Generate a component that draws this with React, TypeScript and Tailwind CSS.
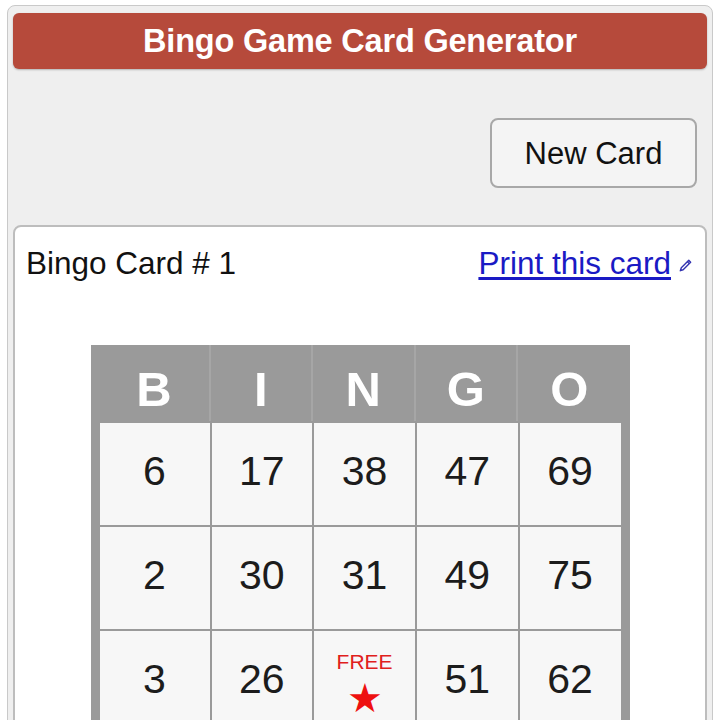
import React from 'react';

const letters = ['B', 'I', 'N', 'G', 'O'];

// only the first three rows are in view
const rows: (number | null)[][] = [
  [6, 17, 38, 47, 69],
  [2, 30, 31, 49, 75],
  [3, 26, null, 51, 62],
];

const PencilIcon = () => (
  <svg width="15" height="15" viewBox="0 0 16 16" className="inline-block ml-[7px] mb-[1px]">
    <path d="M11.5 2.5 L13.5 4.5 L5.5 12.5 L2.5 13.5 L3.5 10.5 Z" fill="none" stroke="#3232b0" strokeWidth="1.5" strokeLinejoin="round" />
    <path d="M10 4 L12 6" stroke="#3232b0" strokeWidth="1.3" />
  </svg>
);

export default function App() {
  return (
    <div className="h-screen overflow-hidden bg-white pt-[5px] px-[7px] font-['Liberation_Sans',Arial,sans-serif]">
      <div className="rounded-[8px] border border-[#c9c9c9] bg-[#efefef] px-[5px] pt-[7px] pb-[8px]">
        {/* Title bar */}
        <div className="h-[56px] rounded-[6px] bg-[#b64a3b] flex items-center justify-center shadow-[0_1px_2px_rgba(0,0,0,0.25)]">
          <h1 className="text-white font-bold text-[32.5px] leading-none tracking-[-0.2px]">Bingo Game Card Generator</h1>
        </div>

        {/* Controls */}
        <div className="flex justify-end pt-[49px] pr-[10px]">
          <button className="w-[207px] h-[70px] rounded-[8px] border-2 border-[#a8a8a8] bg-[#f4f4f4] text-[#111] text-[31px] leading-none">
            New Card
          </button>
        </div>

        {/* Card */}
        <div className="mt-[37px] rounded-[8px] border-2 border-[#bdbdbd] bg-white pt-[21px] pb-[40px]">
          <div className="flex items-center justify-between pl-[11px] pr-[12px] h-[32px]">
            <span className="text-[31.5px] text-[#111] leading-none">Bingo Card # 1</span>
            <a href="#" className="text-[31.5px] text-[#1a1ac4] underline underline-offset-[3px] leading-none">
              Print this card
              <PencilIcon />
            </a>
          </div>

          <div className="flex justify-center mt-[65px]">
            <div className="w-[539px] bg-[#9a9a9a] px-[9px] pb-[9px]">
              <div className="grid grid-cols-[111px_repeat(4,1fr)] h-[76px]">
                {letters.map((l, i) => (
                  <div
                    key={l}
                    className={`flex items-center justify-center pt-[12px] text-white font-bold text-[49px] leading-none ${i < 4 ? 'border-r-2 border-[#a6a6a6]' : ''}`}
                  >
                    {l}
                  </div>
                ))}
              </div>
              <div className="grid grid-cols-[110px_repeat(4,1fr)] gap-[2px] pt-[2px]">
                {rows.flat().map((n, i) =>
                  n === null ? (
                    <div key={i} className="h-[102px] bg-[#f7f7f7] flex flex-col items-center justify-center pt-[4px]">
                      <span className="text-[#e0201c] text-[21px] leading-none">FREE</span>
                      <span className="text-[#ee1010] text-[40px] leading-none mt-[6px]">★</span>
                    </div>
                  ) : (
                    <div key={i} className="h-[102px] bg-[#f7f7f7] flex items-center justify-center pb-[6px] text-[41px] text-[#1c1c1c] leading-none">
                      {n}
                    </div>
                  )
                )}
              </div>
            </div>
          </div>
        </div>
      </div>
    </div>
  );
}
